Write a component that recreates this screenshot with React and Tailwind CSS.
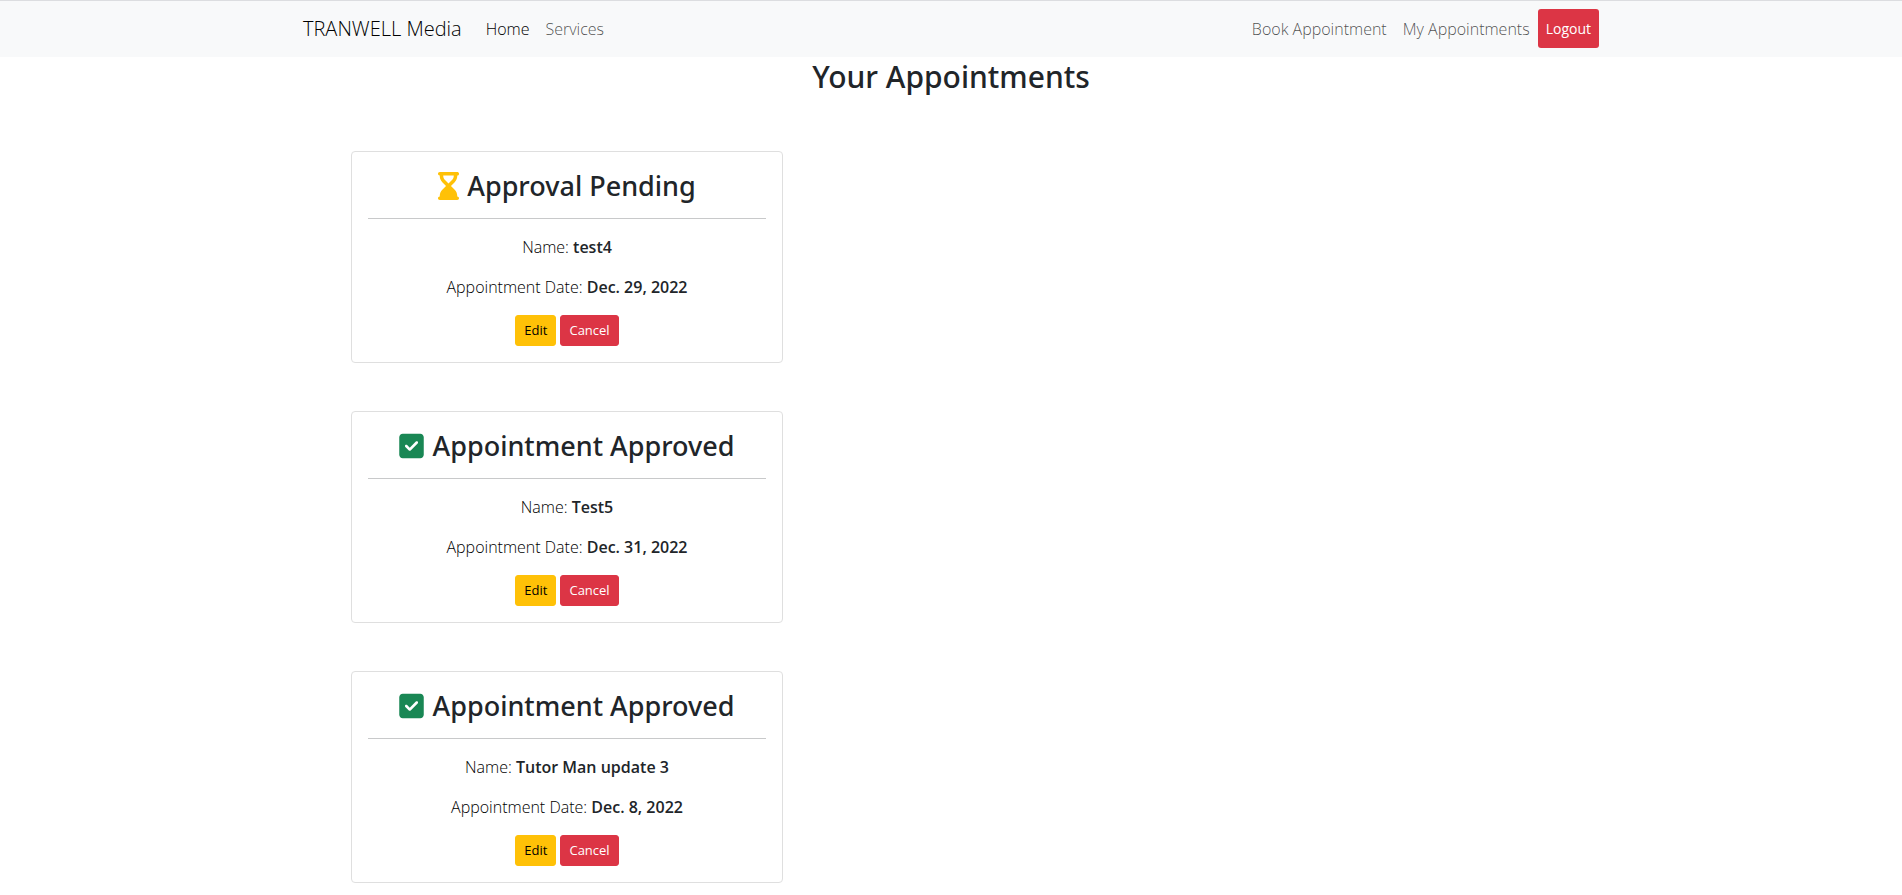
import { FaHourglassEnd, FaSquareCheck } from "react-icons/fa6";

const appointments = [
  { id: 1, approved: false, name: "test4", date: "Dec. 29, 2022" },
  { id: 2, approved: true, name: "Test5", date: "Dec. 31, 2022" },
  { id: 3, approved: true, name: "Tutor Man update 3", date: "Dec. 8, 2022" },
];

function NavLink({ active, children }) {
  return (
    <a href="#" className={active ? "p-2 text-black" : "p-2 text-black/70"}>
      {children}
    </a>
  );
}

function Navbar() {
  return (
    <nav className="border-t border-[#dcdde0] bg-[#f8f9fa] py-2">
      <div className="mx-auto flex max-w-[1320px] items-center px-3">
        <a href="#" className="mr-4 text-xl leading-[30px] text-black">
          TRANWELL Media
        </a>
        <div className="flex flex-1 items-center">
          <NavLink active>Home</NavLink>
          <NavLink>Services</NavLink>
        </div>
        <div className="flex items-start">
          <NavLink>Book Appointment</NavLink>
          <NavLink>My Appointments</NavLink>
          <button type="button" className="rounded-[3px] bg-[#dc3545] px-2 py-2 text-sm leading-[23px] font-normal text-white">
            Logout
          </button>
        </div>
      </div>
    </nav>
  );
}

function AppointmentCard({ approved, name, date }) {
  return (
    <article className="w-1/3 rounded border border-[#dfdfdf] p-4 text-center">
      <h2 className="flex items-center justify-center gap-2 font-['Noto_Sans','Open_Sans',sans-serif] text-[27px] leading-9 font-medium">
        {approved ? (
          <FaSquareCheck className="h-7 w-[25px] text-[#198754]" aria-hidden="true" />
        ) : (
          <FaHourglassEnd className="h-7 w-[21px] text-[#ffc107]" aria-hidden="true" />
        )}
        {approved ? "Appointment Approved" : "Approval Pending"}
      </h2>
      <hr className="mt-[14px] mb-4 border-[#c8c9ca]" />
      <p className="mb-4 text-black">
        Name: <strong className="font-semibold text-[#212529]">{name}</strong>
      </p>
      <p className="mb-4 text-black">
        Appointment Date: <strong className="font-semibold text-[#212529]">{date}</strong>
      </p>
      <div className="flex justify-center gap-1 text-[13px] leading-[21px] font-normal">
        <button type="button" className="rounded-[3px] border border-[#ffc107] bg-[#ffc107] px-2 py-1 text-black">
          Edit
        </button>
        <button type="button" className="rounded-[3px] border border-[#dc3545] bg-[#dc3545] px-2 py-1 text-white">
          Cancel
        </button>
      </div>
    </article>
  );
}

export default function App() {
  return (
    <div className="bg-white font-['Open_Sans','Noto_Sans',sans-serif] text-base leading-6 font-light text-[#212529]">
      <Navbar />
      <main className="mx-auto max-w-[1320px] px-3">
        <h1 className="mb-[54px] text-center font-['Noto_Sans','Open_Sans',sans-serif] text-[30px] leading-10 font-medium">
          Your Appointments
        </h1>
        <div className="flex flex-col gap-12 pb-3 [&>article]:ml-12">
          {appointments.map((item) => (
            <AppointmentCard key={item.id} {...item} />
          ))}
        </div>
      </main>
    </div>
  );
}
